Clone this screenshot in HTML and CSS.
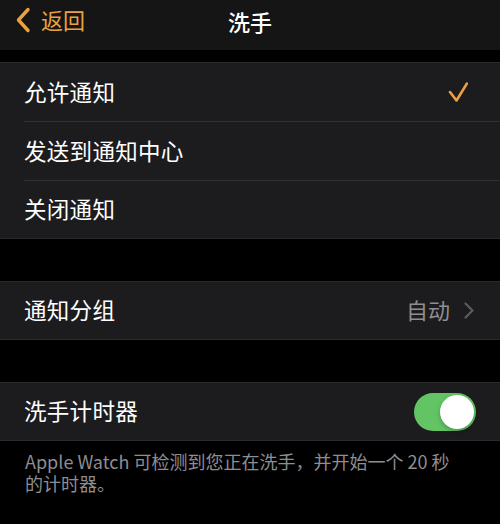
FILE: index.html
```html
<!DOCTYPE html>
<html lang="zh-CN">
  <head>
    <meta charset="UTF-8" />
    <meta name="viewport" content="width=device-width, initial-scale=1.0" />
    <title>洗手</title>
    <link rel="stylesheet" href="styles.css">
  </head>
  <body>
    <!-- 导航栏 -->
    <div class="nav-bar">
      <div class="nav-back">
        <svg class="nav-back-icon" width="16" height="26" viewBox="0 0 16 26">
          <path d="M13 2.5 L3.5 13 L13 23.5" />
        </svg>
        <span>返回</span>
      </div>
      <div class="nav-title">洗手</div>
    </div>

    <!-- 通知方式 -->
    <div class="group first">
      <div class="row">
        <span class="row-title">允许通知</span>
        <svg class="check-icon" width="20" height="20" viewBox="0 0 20 20">
          <path d="M2 10 L8.5 18.5 L19 1.5" />
        </svg>
      </div>
      <div class="row">
        <span class="row-title">发送到通知中心</span>
      </div>
      <div class="row">
        <span class="row-title">关闭通知</span>
      </div>
    </div>

    <!-- 通知分组 -->
    <div class="group">
      <div class="row">
        <span class="row-title">通知分组</span>
        <div class="row-detail">
          <span>自动</span>
          <svg class="chevron-icon" width="10" height="17" viewBox="0 0 10 17">
            <path d="M1.5 1.5 L8.5 8.5 L1.5 15.5" />
          </svg>
        </div>
      </div>
    </div>

    <!-- 洗手计时器 -->
    <div class="group">
      <div class="row">
        <span class="row-title">洗手计时器</span>
        <div class="switch on">
          <div class="switch-knob"></div>
        </div>
      </div>
    </div>
    <p class="group-footer">Apple Watch 可检测到您正在洗手，并开始一个 20 秒的计时器。</p>
  </body>
</html>
```

FILE: styles.css
```css
* {
  margin: 0;
  padding: 0;
  box-sizing: border-box;
  -webkit-font-smoothing: antialiased;
}

body {
  font-family: "Noto Sans CJK SC", "Noto Sans", sans-serif;
  background-color: #000000;
  color: #ffffff;
  min-height: 100vh;
}

/* 导航栏 */
.nav-bar {
  height: 50px;
  background: #151515;
  position: relative;
  display: flex;
  align-items: center;
  justify-content: center;
}

.nav-back {
  position: absolute;
  left: 15px;
  top: 7px;
  display: flex;
  align-items: center;
  gap: 10px;
  color: #eba140;
  font-size: 22px;
  line-height: 28px;
}

.nav-back span {
  margin-top: -3px;
}

.nav-back-icon path {
  fill: none;
  stroke: #eba140;
  stroke-width: 3.4;
  stroke-linecap: round;
  stroke-linejoin: round;
}

.nav-title {
  font-size: 22px;
  font-weight: 500;
  line-height: 28px;
  margin-top: -8px;
}

/* 列表分组 */
.group {
  margin-top: 42px;
  background: #1c1c1e;
  border-top: 1px solid #2a2a2c;
  border-bottom: 1px solid #2a2a2c;
}

.group.first {
  margin-top: 12px;
}

.row {
  height: 59px;
  margin-left: 24px;
  padding-right: 24px;
  padding-bottom: 3px;
  display: flex;
  align-items: center;
  justify-content: space-between;
  border-bottom: 1px solid #323234;
}

.row:last-child {
  border-bottom: none;
  height: 57px;
}

.row-title {
  font-size: 22.5px;
  color: #ffffff;
  letter-spacing: 0.3px;
}

.check-icon {
  margin-right: 8px;
  margin-top: 3px;
}

.check-icon path {
  fill: none;
  stroke: #eba140;
  stroke-width: 2.6;
  stroke-linecap: round;
  stroke-linejoin: round;
}

.row-detail {
  display: flex;
  align-items: center;
  gap: 14px;
  font-size: 22px;
  color: #8e8e93;
  margin-right: 2px;
}

.chevron-icon {
  margin-top: 2px;
}

.chevron-icon path {
  fill: none;
  stroke: #5c5c60;
  stroke-width: 2.2;
  stroke-linecap: round;
  stroke-linejoin: round;
}

/* 开关 */
.switch {
  width: 62px;
  height: 38px;
  border-radius: 19px;
  background: #3a3a3c;
  padding: 2px;
  margin-top: 3px;
  display: flex;
  justify-content: flex-start;
}

.switch.on {
  background: #63c464;
  justify-content: flex-end;
}

.switch-knob {
  width: 34px;
  height: 34px;
  border-radius: 50%;
  background: #ffffff;
  box-shadow: 0 2px 4px rgba(0, 0, 0, 0.25);
}

.group-footer {
  padding: 9px 40px 0 25px;
  font-size: 18px;
  line-height: 22px;
  color: #8d8d92;
}
```
